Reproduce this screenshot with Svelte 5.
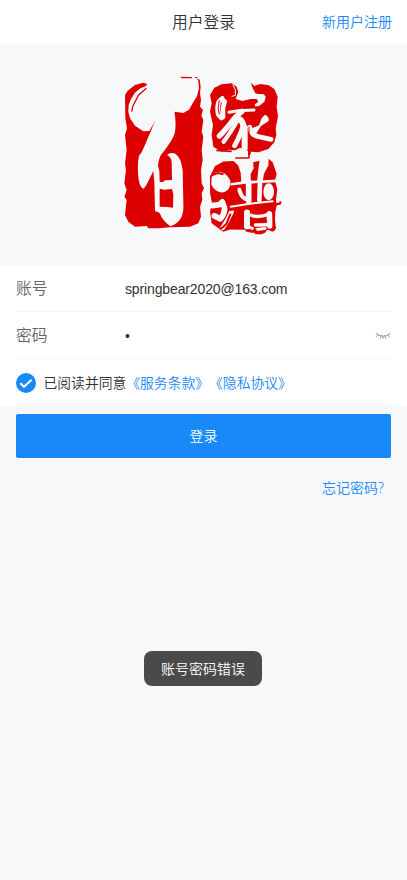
<script>
  let account = $state('springbear2020@163.com');
  let agreed = $state(true);
</script>

<main>
  <header>
    <span></span>
    <h1>用户登录</h1>
    <a href="#register">新用户注册</a>
  </header>

  <section class="logo">
    <svg width="180" height="180" viewBox="0 0 540 540" role="img" aria-label="百家谱">
      <!-- left seal -->
      <path fill="#dc0000" d="M30 90 38 77 60 60 85 53 97 57 92 64 76 70 60 83 48 102 41 120 40 140 45 160 60 182 85 199 103 198 119 170 150 200 178 140 205 144 222 134 234 113 246 94 252 70 250 48 245 40 254 44 257 65 255 85 258 105 255 125 264 135 259 152 265 165 260 200 265 215 260 255 263 285 258 315 260 355 267 370 260 385 262 405 255 425 258 455 250 475 225 485 165 487 130 490 100 490 95 483 60 485 40 470 30 450 35 405 28 395 35 375 28 355 33 315 30 295 35 255 30 210 36 190 31 160Z" />
      <path fill="#dc0000" d="M196 35 232 36 230 40 200 40ZM240 36h7v3h-7Z" />
      <path fill="#f7f8fa" d="M119 170Q98 222 80 262L72 272Q66 300 71 345Q76 370 86 371Q95 361 102 344L115 318 118 353 120 438 134 444Q142 467 166 484Q187 477 198 459Q207 442 205 412L203 315Q198 277 181 266 170 261 159 267L157 271Q168 276 170 291L171 345 150 346 143 352 134 350 133 317 129 302Q131 273 145 261Q175 222 179 205Q185 178 178 138Z" />
      <path fill="#dc0000" d="M134 371 148 374 171 372 175 388 174 428 157 426 134 425Z" />
      <path fill="none" stroke="#dc0000" stroke-width="4" d="m94 70-23 20-17 32-4 18" />

      <!-- upper right seal -->
      <g transform="translate(270 30)">
        <path fill="#dc0000" d="M15 60 28 38 50 28 80 25 95 35 100 52 94 72 150 72 150 33 165 28 190 30 208 42 218 65 215 95 219 125 212 160 214 180 208 202 190 222 160 232 138 230 136 240 130 240 130 228 105 218 90 226 70 224 50 230 25 215 20 180 24 150 15 110 20 85Z" />
        <path fill="#dc0000" d="M138 23Q145 52 156 55L180 55V30L165 28 148 33Z" />
        <g fill="none" stroke="#f7f8fa" stroke-linecap="round" stroke-linejoin="round">
          <path stroke-width="3" d="M84 30Q95 43 91 61L81 64" />
          <path stroke-width="14" d="M52 70 41 81Q35 99 40 119L49 129 54 126V99L59 79" />
          <path stroke-width="9" d="M72 112 99 107 147 105" />
          <path stroke-width="16" d="M111 109Q85 130 77 145L50 176 43 183" />
          <path stroke-width="13" d="M98 135Q76 174 56 200" />
          <path stroke-width="15" d="M113 156Q108 177 89 212" />
          <path stroke-width="18" d="M98 129Q117 137 119 170V220" />
          <path stroke-width="15" d="M134 157Q140 181 157 184L198 193" />
        </g>
        <path fill="#f7f8fa" d="M92 72Q97 60 100 50L140 43Q146 57 160 57L177 58 182 66 178 81 161 94 150 94 150 88 160 80 155 72 137 72 112 78ZM180 119Q196 128 190 139L168 153 147 186 136 179 143 159 162 151 170 130Z" />
        <path fill="none" stroke="#dc0000" stroke-width="3" d="M43 76Q36 99 43 118M132 155V238" />
      </g>

      <path fill="none" stroke="#dc0000" stroke-width="5" stroke-linejoin="round" d="M304 256 350 259M361 279 402 279V258" />

      <!-- lower right seal -->
      <g transform="translate(270 271) scale(1 1.02)">
        <path fill="#dc0000" d="M15 62 30 32 55 18 84 17 108 28 145 20 166 16 162 45 180 35 191 10 203 20 215 55 210 75 217 100 213 130 215 150 208 174 213 216 202 225 190 219 168 229 145 228 132 221 120 219 75 218 55 225 20 200 15 165 21 140 15 110Z" />
        <path fill="#f7f8fa" d="M86 16 104 21 131 9 144 17 146 38 137 55 137 79 109 80 107 51 100 31ZM164 14 191 12 190 30 177 54 173 78 156 79 159 50Z" />
        <path fill="#f7f8fa" d="M20 64Q29 46 48 49 67 55 76 75 78 89 69 101 57 112 43 108 25 102 19 86Z" />
        <g fill="none" stroke="#f7f8fa" stroke-linecap="round" stroke-linejoin="round">
          <path stroke-width="8" d="M80 85 116 80 217 75" />
          <path stroke-width="17" d="M131 78V134" />
          <path stroke-width="12" d="M103 101Q108 121 121 128" />
          <path stroke-width="14" d="M165 80 163 132" />
          <path stroke-width="6" d="M77 151 130 143 203 135" />
          <path stroke-width="17" d="M22 148 43 145 52 137 59 156Q58 174 46 187L28 178" />
          <path stroke-width="14" d="M80 165Q67 194 53 213" />
          <path stroke-width="18" d="M126 168V209" />
          <path stroke-width="10" d="M139 176Q158 185 192 173M151 205 187 204" />
          <path stroke-width="17" d="M193 172 194 207" />
          <path stroke-width="9" d="M129 210 142 215M155 218 180 215" />
        </g>
        <ellipse cx="191" cy="107" rx="16" ry="25" fill="#f7f8fa" />
        <g fill="none" stroke="#dc0000" stroke-linecap="round" stroke-linejoin="round">
          <path stroke-width="7" d="M76 160 130 151 199 146 224 142 226 139" />
          <path stroke-width="6" d="M208 158 206 220M124 221l16 4 12-5M153 193h31M20 59l19-7 14 3M76 174 64 202 48 216M152 229h18l10-5" />
        </g>
      </g>
    </svg>
  </section>

  <form onsubmit={(e) => e.preventDefault()}>
    <div class="fields">
      <label class="row">
        <span class="label">账号</span>
        <input bind:value={account} spellcheck="false" />
      </label>
      <div class="row">
        <span class="label">密码</span>
        <span class="password">•</span>
        <svg class="eye" width="16" height="16" viewBox="0 0 16 16" fill="none" stroke="#969799" stroke-width="1" stroke-linecap="round">
          <path d="M1 5.5Q8 11 15 5.5M3.2 7 1.5 8.5M6 8.2 5.3 10.3M10 8.2l.7 2.1M12.8 7l1.7 1.5M8 8.5v2" />
        </svg>
      </div>
      <div class="row agreement">
        <button class="check" type="button" aria-label="已阅读并同意" aria-pressed={agreed} onclick={() => (agreed = !agreed)}>
          <svg width="20" height="20" viewBox="0 0 20 20">
            <circle cx="10" cy="10" r="10" fill="#1989fa" />
            {#if agreed}<path d="m4.3 10.2 3.7 3.6 7.6-7.1" fill="none" stroke="#fff" stroke-width="2" />{/if}
          </svg>
        </button>
        <span>已阅读并同意<a href="#terms">《服务条款》</a><a href="#privacy">《隐私协议》</a></span>
      </div>
    </div>
    <button class="submit">登录</button>
    <a class="forgot" href="#forgot">忘记密码?</a>
  </form>

  <div class="toast" role="status">账号密码错误</div>
</main>

<style>
  :global(body) { background: #f7f8fa; }
  main {
    height: 880px;
    position: relative;
    box-sizing: border-box;
    overflow: hidden;
    background: #f7f8fa;
    color: #323233;
    font: 350 14px/20px "Liberation Sans", "Noto Sans CJK SC", sans-serif;
    text-spacing-trim: space-all;
  }
  header {
    height: 44px;
    box-sizing: border-box;
    padding: 0 15px 0 16px;
    display: grid;
    grid-template-columns: 1fr auto 1fr;
    align-items: center;
    background: #fff;
  }
  h1 { margin: 0; padding: 1px 1px 0 0; font-size: 15.8px; font-weight: 350; line-height: 24px; }
  header a { justify-self: end; }
  a { color: #1989fa; text-decoration: none; }
  .logo { height: 221px; display: flex; justify-content: center; align-items: flex-start; padding-top: 21px; box-sizing: border-box; }
  .logo svg { margin-left: 3px; }
  form { display: flex; flex-direction: column; }
  .fields { background: #fff; padding: 0 16px; }
  .row { height: 47px; padding-top: 2px; box-sizing: border-box; border-bottom: 1px solid #f5f6f7; display: flex; align-items: center; }
  .label { width: 109px; flex: none; color: #646566; font-size: 15.8px; }
  input { border: 0; padding: 0; margin: 0; flex: 1; min-width: 0; background: transparent; color: #323233; font: 400 14px/24px "Liberation Sans", sans-serif; letter-spacing: -0.13px; outline: 0; }
  .password { flex: 1; }
  .agreement { gap: 8px; }
  .check { border: 0; padding: 0; margin-left: -0.5px; background: none; display: flex; }
  .agreement span { font-size: 13.8px; padding-top: 2px; }
  .submit { margin: 8px 16px 0; height: 44px; border: 0; border-radius: 2px; background: #1989fa; color: #fff; font: inherit; }
  .forgot { align-self: flex-end; margin: 20px 23px 0 0; font-family: "Noto Sans", "Noto Sans CJK SC", sans-serif; font-size: 14px; }
  .toast {
    position: absolute;
    left: 50%;
    top: 651px;
    transform: translateX(-50%);
    width: 118px;
    height: 35px;
    margin-left: -0.5px;
    border-radius: 8px;
    background: #4a4a4b;
    color: #fff;
    display: flex;
    align-items: center;
    justify-content: center;
  }
</style>
